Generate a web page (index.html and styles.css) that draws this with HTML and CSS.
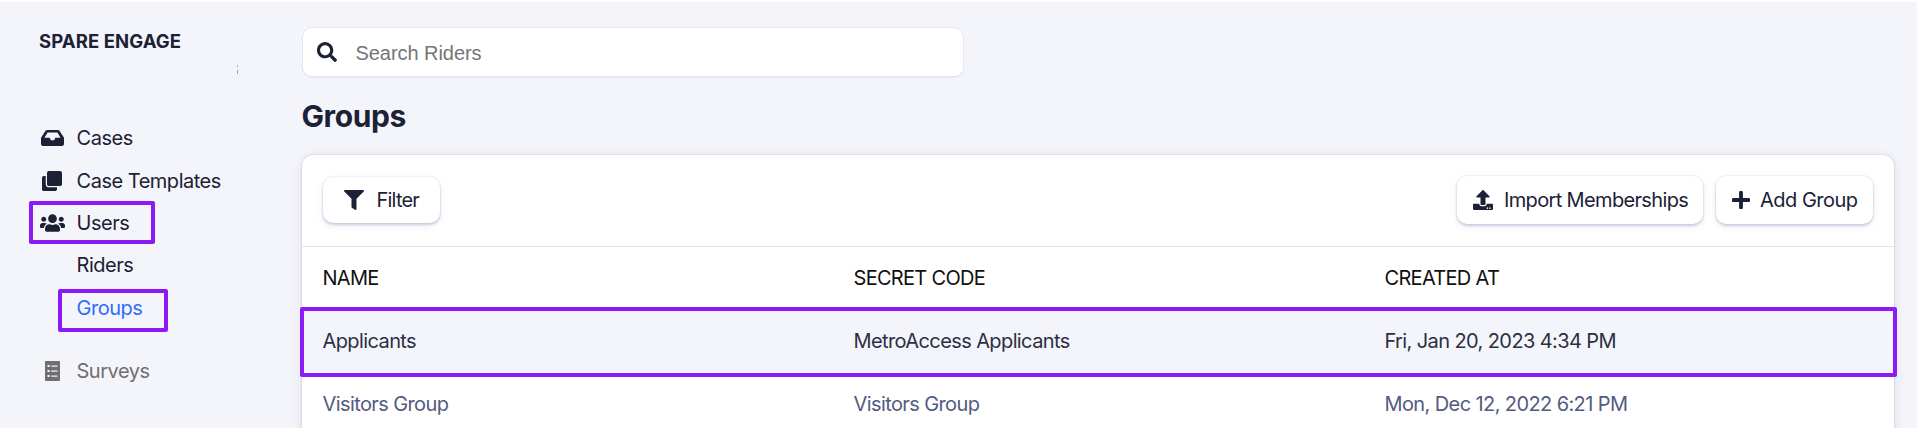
FILE: index.html
```html
<!DOCTYPE html>
<html lang="en">
<head>
<meta charset="utf-8">
<title>Groups</title>
<link rel="stylesheet" href="styles.css">
</head>
<body>
<div class="app">
  <nav class="sidebar">
    <div class="brand"><span>SPARE ENGAGE</span></div>
    <div class="divider-mark"></div>
    <ul class="nav">
      <li class="nav-item">
        <svg class="icon" width="23" height="16" viewBox="0 0 576 400" preserveAspectRatio="none"><path d="M567.900 179.800L462.300 21.400A48 48 0 0 0 422.400 0H153.600a48 48 0 0 0-39.900 21.400L8.100 179.800A48 48 0 0 0 0 206.400V352c0 26.500 21.500 48 48 48h480c26.500 0 48-21.500 48-48V206.400a48 48 0 0 0-8.100-26.600zM360 192l-32 64h-80l-32-64H87L166 64h244l79 128z"/></svg>
        <span>Cases</span>
      </li>
      <li class="nav-item">
        <svg class="icon" width="20" height="20" viewBox="0 0 512 512"><path d="M464 0c26.510 0 48 21.490 48 48v288c0 26.510-21.490 48-48 48H176c-26.510 0-48-21.490-48-48V48c0-26.510 21.490-48 48-48h288M176 416c-44.112 0-80-35.888-80-80V128H48c-26.510 0-48 21.490-48 48v288c0 26.510 21.490 48 48 48h288c26.510 0 48-21.490 48-48v-48H176z"/></svg>
        <span>Case Templates</span>
      </li>
      <li class="nav-item marked-users">
        <svg class="icon" width="25" height="18" viewBox="0 0 640 448"><path d="M96 192c35.300 0 64-28.700 64-64s-28.700-64-64-64-64 28.700-64 64 28.700 64 64 64zm448 0c35.300 0 64-28.700 64-64s-28.700-64-64-64-64 28.700-64 64 28.700 64 64 64zm32 32h-64c-17.600 0-33.500 7.100-45.100 18.600 40.300 22.100 68.900 62 75.100 109.400h66c17.700 0 32-14.300 32-32v-32c0-35.300-28.700-64-64-64zm-256 0c61.900 0 112-50.100 112-112S381.900 0 320 0 208 50.100 208 112s50.100 112 112 112zm76.800 32h-8.300c-20.800 10-43.900 16-68.500 16s-47.600-6-68.500-16h-8.300C179.600 256 128 307.600 128 371.200V400c0 26.500 21.500 48 48 48h288c26.500 0 48-21.500 48-48v-28.800c0-63.600-51.600-115.200-115.200-115.200zm-223.700-13.400C161.500 231.100 145.600 224 128 224H64c-35.300 0-64 28.700-64 64v32c0 17.700 14.300 32 32 32h65.900c6.300-47.400 34.900-87.300 75.200-109.400z"/></svg>
        <span>Users</span>
      </li>
      <li class="nav-item nav-child"><span>Riders</span></li>
      <li class="nav-item nav-child active marked-groups"><span>Groups</span></li>
      <li class="nav-item muted">
        <svg class="icon" width="15" height="20" viewBox="0 0 384 512"><path fill-rule="evenodd" d="M24 0h336a24 24 0 0 1 24 24v464a24 24 0 0 1-24 24H24a24 24 0 0 1-24-24V24A24 24 0 0 1 24 0zM64 100v56h56v-56zM160 112v32h160v-32zM64 228v56h56v-56zM160 240v32h160v-32zM64 356v56h56v-56zM160 368v32h160v-32z"/></svg>
        <span>Surveys</span>
      </li>
    </ul>
  </nav>
  <main class="main">
    <div class="search">
      <svg class="icon" width="20" height="20" viewBox="0 0 512 512"><path d="M505 442.700L405.300 343c-4.500-4.500-10.600-7-17-7H372c27.600-35.300 44-79.700 44-128C416 93.100 322.900 0 208 0S0 93.100 0 208s93.100 208 208 208c48.300 0 92.700-16.400 128-44v16.300c0 6.400 2.500 12.500 7 17l99.700 99.700c9.400 9.400 24.600 9.400 33.900 0l28.300-28.300c9.400-9.400 9.400-24.600.1-34zM208 336c-70.700 0-128-57.200-128-128 0-70.700 57.200-128 128-128 70.700 0 128 57.200 128 128 0 70.700-57.200 128-128 128z"/></svg>
      <span class="placeholder">Search Riders</span>
    </div>
    <h1 class="title"><span>Groups</span></h1>
    <section class="card">
      <div class="toolbar">
        <button class="btn btn-filter">
          <svg class="icon" width="20" height="20" viewBox="0 0 512 512"><path d="M487.976 0H24.028C2.710 0-8.047 25.866 7.058 40.971L192 225.941V432c0 7.831 3.821 15.170 10.237 19.662l80 55.980C298.020 518.690 320 507.493 320 487.980V225.941l184.947-184.970C520.021 25.896 509.338 0 487.976 0z"/></svg>
          <span>Filter</span>
        </button>
        <div class="actions">
          <button class="btn btn-import">
            <svg class="icon" width="20" height="20" viewBox="0 0 512 512"><path d="M296 384h-80c-13.300 0-24-10.700-24-24V192h-87.700c-17.800 0-26.700-21.500-14.100-34.100L242.300 5.700c7.500-7.500 19.800-7.500 27.300 0l152.200 152.200c12.600 12.600 3.700 34.100-14.100 34.100H320v168c0 13.300-10.700 24-24 24zm216-8v112c0 13.300-10.700 24-24 24H24c-13.300 0-24-10.700-24-24V376c0-13.300 10.700-24 24-24h136v8c0 30.900 25.100 56 56 56h80c30.900 0 56-25.100 56-56v-8h136c13.300 0 24 10.700 24 24zm-124 88c0-11-9-20-20-20s-20 9-20 20 9 20 20 20 20-9 20-20zm64 0c0-11-9-20-20-20s-20 9-20 20 9 20 20 20 20-9 20-20z"/></svg>
            <span>Import Memberships</span>
          </button>
          <button class="btn btn-add">
            <svg class="icon" width="18" height="18" viewBox="0 0 448 448"><path d="M416 176H272V32c0-17.670-14.330-32-32-32h-32c-17.670 0-32 14.330-32 32v144H32c-17.670 0-32 14.330-32 32v32c0 17.670 14.330 32 32 32h144v144c0 17.670 14.330 32 32 32h32c17.670 0 32-14.330 32-32V272h144c17.670 0 32-14.330 32-32v-32c0-17.670-14.330-32-32-32z"/></svg>
            <span>Add Group</span>
          </button>
        </div>
      </div>
      <div class="row head"><span>NAME</span><span>SECRET CODE</span><span>CREATED AT</span></div>
      <div class="row selected"><span>Applicants</span><span>MetroAccess Applicants</span><span>Fri, Jan 20, 2023 4:34 PM</span></div>
      <div class="row"><span>Visitors Group</span><span>Visitors Group</span><span>Mon, Dec 12, 2022 6:21 PM</span></div>
    </section>
  </main>
</div>
</body>
</html>
```
FILE: styles.css
```css
*, *::after { box-sizing: border-box; }

body {
  margin: 0;
  height: 434px;
  padding: 2px 3px 6px 0;
  overflow: hidden;
  background: #fff;
  color: #1c2136;
  font: 400 20px/24px Inter, "Liberation Sans", sans-serif;
}

.app {
  display: flex;
  height: 426px;
  overflow: hidden;
  background: #f4f5fa;
}

.icon { display: block; flex: none; fill: currentColor; }

/* Sidebar */
.sidebar { flex: none; width: 301.500px; padding: 27px 0 0 39px; }

.brand { font-size: 18.5px; font-weight: 700; letter-spacing: 0.1px; }

.divider-mark {
  width: 1px;
  height: 9px;
  margin: 12px 0 0 198px;
  background: linear-gradient(#b4b6bc 0 2px, transparent 2px 5px, #a0a2a8 5px);
}

.nav { margin: 43px 0 0; padding: 0; list-style: none; letter-spacing: -0.48px; }

.nav-item {
  position: relative;
  display: grid;
  grid-template-columns: 26px 1fr;
  align-items: center;
  column-gap: 11.500px;
  height: 42.400px;
}

.nav-item .icon { justify-self: center; }
.nav-child span { grid-column: 2; }
.active { color: #2f6bff; }
.muted { margin-top: 21px; color: #6f6f6f; }

.marked-users::after,
.marked-groups::after {
  content: "";
  position: absolute;
  top: -1px;
  left: -10px;
  width: 126px;
  height: 43px;
  border: 4px solid #8c1af6;
  border-radius: 2px;
}

.marked-groups::after { top: 2px; left: 19px; width: 110px; }

/* Main column */
.main { flex: none; width: 1592.500px; padding-top: 25px; }

.search {
  display: flex;
  align-items: center;
  gap: 19px;
  width: 662px;
  height: 51px;
  padding-left: 14px;
  border: 1px solid #e4e6f0;
  border-bottom-width: 2px;
  border-radius: 10px;
  background: #fff;
}

.placeholder { padding-top: 1px; color: #757575; font-family: "Liberation Sans", Arial, sans-serif; letter-spacing: -0.05px; }

.title { margin: 20px 0 0; font-size: 30px; font-weight: 700; line-height: 36px; letter-spacing: -0.4px; }

.card {
  height: 300px;
  margin-top: 21px;
  border-radius: 11px;
  background: #fff;
  box-shadow: 0 0 2px rgba(60, 50, 130, .28), 0 3px 12px rgba(60, 50, 130, .12);
}

.toolbar {
  display: flex;
  align-items: center;
  justify-content: space-between;
  height: 92px;
  padding: 0 21px 1px;
  border-bottom: 1px solid #dfe1ee;
}

.actions { display: flex; gap: 13px; }

.btn {
  display: flex;
  align-items: center;
  height: 48px;
  border: 0;
  border-radius: 10px;
  background: #fff;
  color: #1c2136;
  font: inherit;
  letter-spacing: -0.65px;
  white-space: nowrap;
  box-shadow: 0 0 2px rgba(60, 50, 130, .18), 0 2px 3px rgba(60, 50, 130, .2), 0 3px 10px rgba(60, 50, 130, .06);
}

.btn-filter { gap: 13px; width: 117px; height: 46px; padding: 0 0 0 21px; letter-spacing: -0.8px; }
.btn-import { gap: 11px; width: 246px; padding: 0 0 0 16px; }
.btn-add { gap: 10px; width: 157px; padding: 0 0 0 16px; letter-spacing: -0.5px; }

.row {
  position: relative;
  display: grid;
  grid-template-columns: 531px 531px 1fr;
  align-items: center;
  height: 63px;
  padding-left: 21px;
  color: #545b80;
  letter-spacing: -0.6px;
}

.head { height: 62px; color: #111; letter-spacing: -0.7px; }
.selected { background: #f4f5fa; color: #2b2f45; }

.selected::after {
  content: "";
  position: absolute;
  inset: -2px -3px -5px -2px;
  border: 4px solid #8c1af6;
  border-radius: 2px;
}
```
